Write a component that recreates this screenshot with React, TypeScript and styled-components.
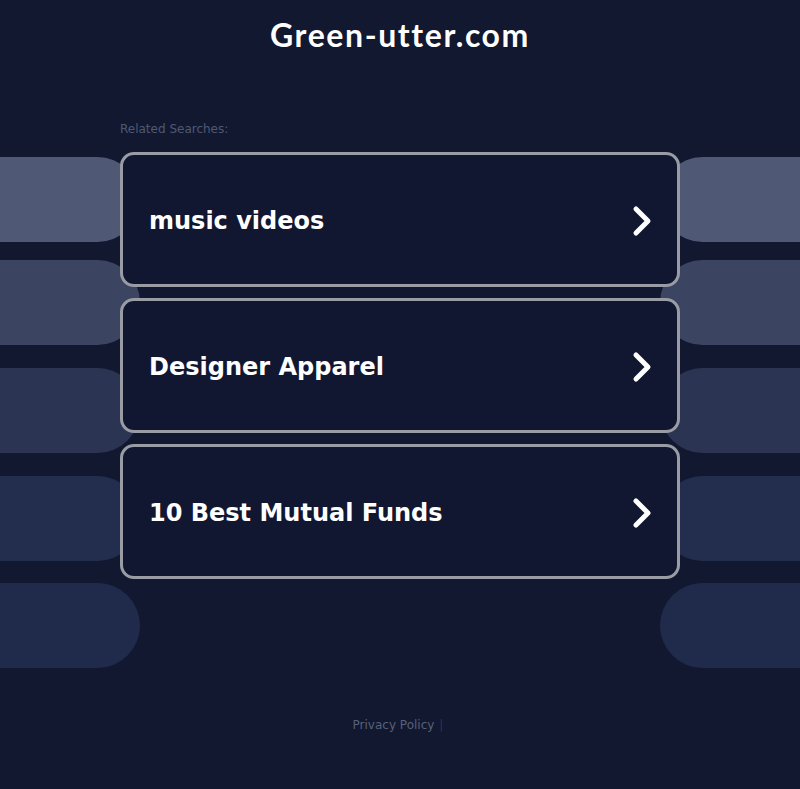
import styled, { createGlobalStyle } from 'styled-components';

const GlobalStyle = createGlobalStyle`
	html, body {
		margin: 0;
		padding: 0;
		background: #111830;
	}
	body {
		font-family: 'DejaVu Sans', sans-serif;
	}
`;

const Page = styled.div`
	position: relative;
	width: 800px;
	height: 789px;
	overflow: hidden;
	background: #111830;
`;

const Backdrop = styled.div`
	position: absolute;
	inset: 0;
	pointer-events: none;
`;

const PillColumn = styled.div<{ $side: 'left' | 'right' }>`
	position: absolute;
	top: 157px;
	${(p) => (p.$side === 'left' ? 'left: -60px;' : 'right: -60px;')}
	display: flex;
	flex-direction: column;
	gap: 18px;
`;

const Pill = styled.div<{ $color: string; $gap: number }>`
	width: 200px;
	height: 85px;
	border-radius: 43px;
	background: ${(p) => p.$color};
	margin-top: ${(p) => p.$gap}px;
`;

const Content = styled.div`
	position: relative;
	display: flex;
	flex-direction: column;
	align-items: center;
`;

const Title = styled.h1`
	margin: 15px 0 0;
	font-family: 'Lato', 'Noto Sans', sans-serif;
	font-weight: 700;
	font-size: 32px;
	line-height: 40px;
	letter-spacing: 1.6px;
	color: #ffffff;
`;

const Listing = styled.div`
	width: 560px;
	margin-top: 66px;
	display: flex;
	flex-direction: column;
`;

const Label = styled.div`
	font-size: 12px;
	line-height: 16px;
	color: #4f5873;
	margin-bottom: 15px;
`;

const CardList = styled.div`
	display: flex;
	flex-direction: column;
	gap: 11px;
`;

const Card = styled.a`
	box-sizing: border-box;
	height: 135px;
	display: flex;
	align-items: center;
	justify-content: space-between;
	padding: 3px 22px 0 26px;
	border: 3px solid #999ca4;
	border-radius: 14px;
	background: #111730;
	color: #ffffff;
	text-decoration: none;
`;

const CardText = styled.span`
	font-family: 'DejaVu Sans', sans-serif;
	font-weight: 700;
	font-size: 24px;
	letter-spacing: 0;
`;

const Footer = styled.div`
	margin-top: 139px;
	margin-right: 4px;
	font-size: 12px;
	color: #58607a;
	display: flex;
	gap: 5px;
`;

const Divider = styled.span`
	color: #2f3650;
`;

const Chevron = () => (
	<svg width="26" height="32" viewBox="0 0 26 32">
		<polyline
			points="7,4 19,16 7,28"
			fill="none"
			stroke="#ffffff"
			strokeWidth="5"
			strokeLinecap="round"
			strokeLinejoin="round"
		/>
	</svg>
);

const pillColors = ['#4f5874', '#3b4461', '#2c3453', '#232d4d', '#202a4b'];
const pillGaps = [0, 0, 5, 5, 4];

const items = ['music videos', 'Designer Apparel', '10 Best Mutual Funds'];

export default function App() {
	return (
		<Page>
			<GlobalStyle />
			<Backdrop>
				<PillColumn $side="left">
					{pillColors.map((c, i) => (
						<Pill key={i} $color={c} $gap={pillGaps[i]} />
					))}
				</PillColumn>
				<PillColumn $side="right">
					{pillColors.map((c, i) => (
						<Pill key={i} $color={c} $gap={pillGaps[i]} />
					))}
				</PillColumn>
			</Backdrop>
			<Content>
				<Title>Green-utter.com</Title>
				<Listing>
					<Label>Related Searches:</Label>
					<CardList>
						{items.map((t) => (
							<Card key={t} href="#">
								<CardText>{t}</CardText>
								<Chevron />
							</Card>
						))}
					</CardList>
				</Listing>
				<Footer>
					<span>Privacy Policy</span>
					<Divider>|</Divider>
				</Footer>
			</Content>
		</Page>
	);
}
